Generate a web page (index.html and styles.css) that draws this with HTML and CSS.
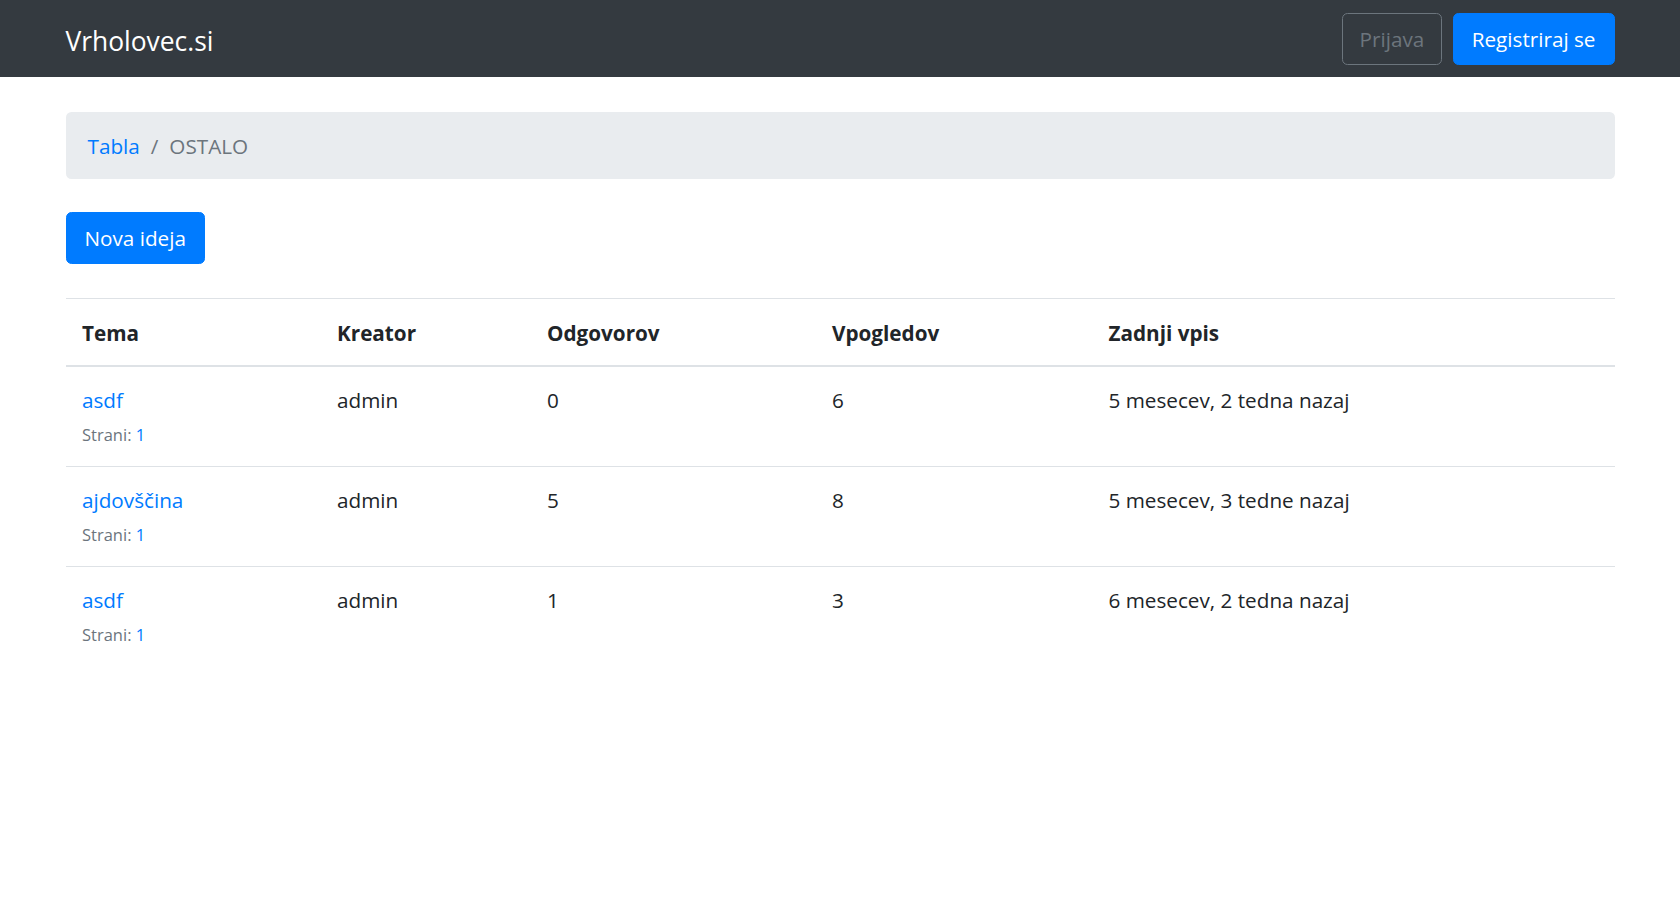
FILE: index.html
```html
<!DOCTYPE html>
<html lang="sl">
<head>
<meta charset="utf-8">
<title>Vrholovec.si</title>
<link rel="stylesheet" href="styles.css">
</head>
<body>
<nav class="navbar">
  <div class="nav-inner">
    <a class="brand" href="#">Vrholovec.si</a>
    <div class="nav-actions">
      <a class="btn btn-outline" href="#">Prijava</a>
      <a class="btn btn-primary btn-register" href="#">Registriraj se</a>
    </div>
  </div>
</nav>
<main class="container">
  <ol class="breadcrumb">
    <li class="crumb"><a href="#">Tabla</a></li>
    <li class="crumb crumb-active">OSTALO</li>
  </ol>
  <a class="btn btn-primary btn-new" href="#">Nova ideja</a>
  <table class="topics">
    <colgroup>
      <col class="c-tema">
      <col class="c-kreator">
      <col class="c-odg">
      <col class="c-vpog">
      <col class="c-zadnji">
    </colgroup>
    <thead>
      <tr>
        <th>Tema</th>
        <th>Kreator</th>
        <th>Odgovorov</th>
        <th>Vpogledov</th>
        <th>Zadnji vpis</th>
      </tr>
    </thead>
    <tbody>
      <tr>
        <td><a href="#">asdf</a><br><small class="pages">Strani: <a href="#">1</a></small></td>
        <td>admin</td>
        <td>0</td>
        <td>6</td>
        <td>5 mesecev, 2 tedna nazaj</td>
      </tr>
      <tr>
        <td><a href="#">ajdovščina</a><br><small class="pages">Strani: <a href="#">1</a></small></td>
        <td>admin</td>
        <td>5</td>
        <td>8</td>
        <td>5 mesecev, 3 tedne nazaj</td>
      </tr>
      <tr>
        <td><a href="#">asdf</a><br><small class="pages">Strani: <a href="#">1</a></small></td>
        <td>admin</td>
        <td>1</td>
        <td>3</td>
        <td>6 mesecev, 2 tedna nazaj</td>
      </tr>
    </tbody>
  </table>
</main>
</body>
</html>
```
FILE: styles.css
```css
* { box-sizing: border-box; }

html, body {
  margin: 0;
  padding: 0;
}

body {
  font-family: "Open Sans", "Noto Sans", "Liberation Sans", sans-serif;
  font-size: 20.7px;
  line-height: 33px;
  color: #212529;
  background: #fff;
}

a {
  color: #007bff;
  text-decoration: none;
}

/* Navbar */
.navbar {
  background: #343a40;
  height: 77px;
}

.nav-inner {
  width: 1549px;
  height: 100%;
  margin: 0 auto;
  display: flex;
  align-items: center;
  justify-content: space-between;
}

.brand {
  color: #fff;
  font-size: 26.4px;
  line-height: 41px;
  padding: 10px 0 4px;
}

.nav-actions {
  display: flex;
  gap: 11px;
}

.btn {
  display: inline-block;
  height: 52px;
  padding: 9px 16.5px 8px;
  line-height: 33px;
  border: 1px solid transparent;
  border-radius: 5.5px;
  font-size: 20.7px;
  white-space: nowrap;
}

.btn-outline {
  color: #6c757d;
  border-color: #6c757d;
}

.btn-primary {
  color: #fff;
  background: #007bff;
  border-color: #007bff;
}

.btn-register {
  padding-left: 18px;
  padding-right: 18px;
}

/* Content */
.container {
  width: 1549px;
  margin: 35px auto 0;
}

.breadcrumb {
  list-style: none;
  margin: 0 0 33px;
  padding: 18px 22px 16px;
  background: #e9ecef;
  border-radius: 5.5px;
  display: flex;
}

.crumb + .crumb {
  padding-left: 11px;
}

.crumb + .crumb::before {
  content: "/";
  color: #6c757d;
  padding-right: 11px;
}

.crumb-active {
  color: #6c757d;
}

.btn-new {
  padding-left: 18px;
  padding-right: 18px;
  margin-bottom: 34px;
}

.topics {
  width: 100%;
  border-collapse: collapse;
  table-layout: fixed;
}

.c-tema { width: 255px; }
.c-kreator { width: 210px; }
.c-odg { width: 285px; }
.c-vpog { width: 276.5px; }
.c-zadnji { width: auto; }

.topics th,
.topics td {
  padding: 17px 16.5px 16px;
  text-align: left;
  vertical-align: top;
  border-top: 1px solid #dee2e6;
}

.topics td {
  padding-bottom: 15px;
}

.topics th {
  padding-top: 18px;
  padding-bottom: 15px;
  font-weight: 700;
  border-bottom: 2px solid #dee2e6;
}

.pages {
  font-size: 16.5px;
  color: #6c757d;
}
```
